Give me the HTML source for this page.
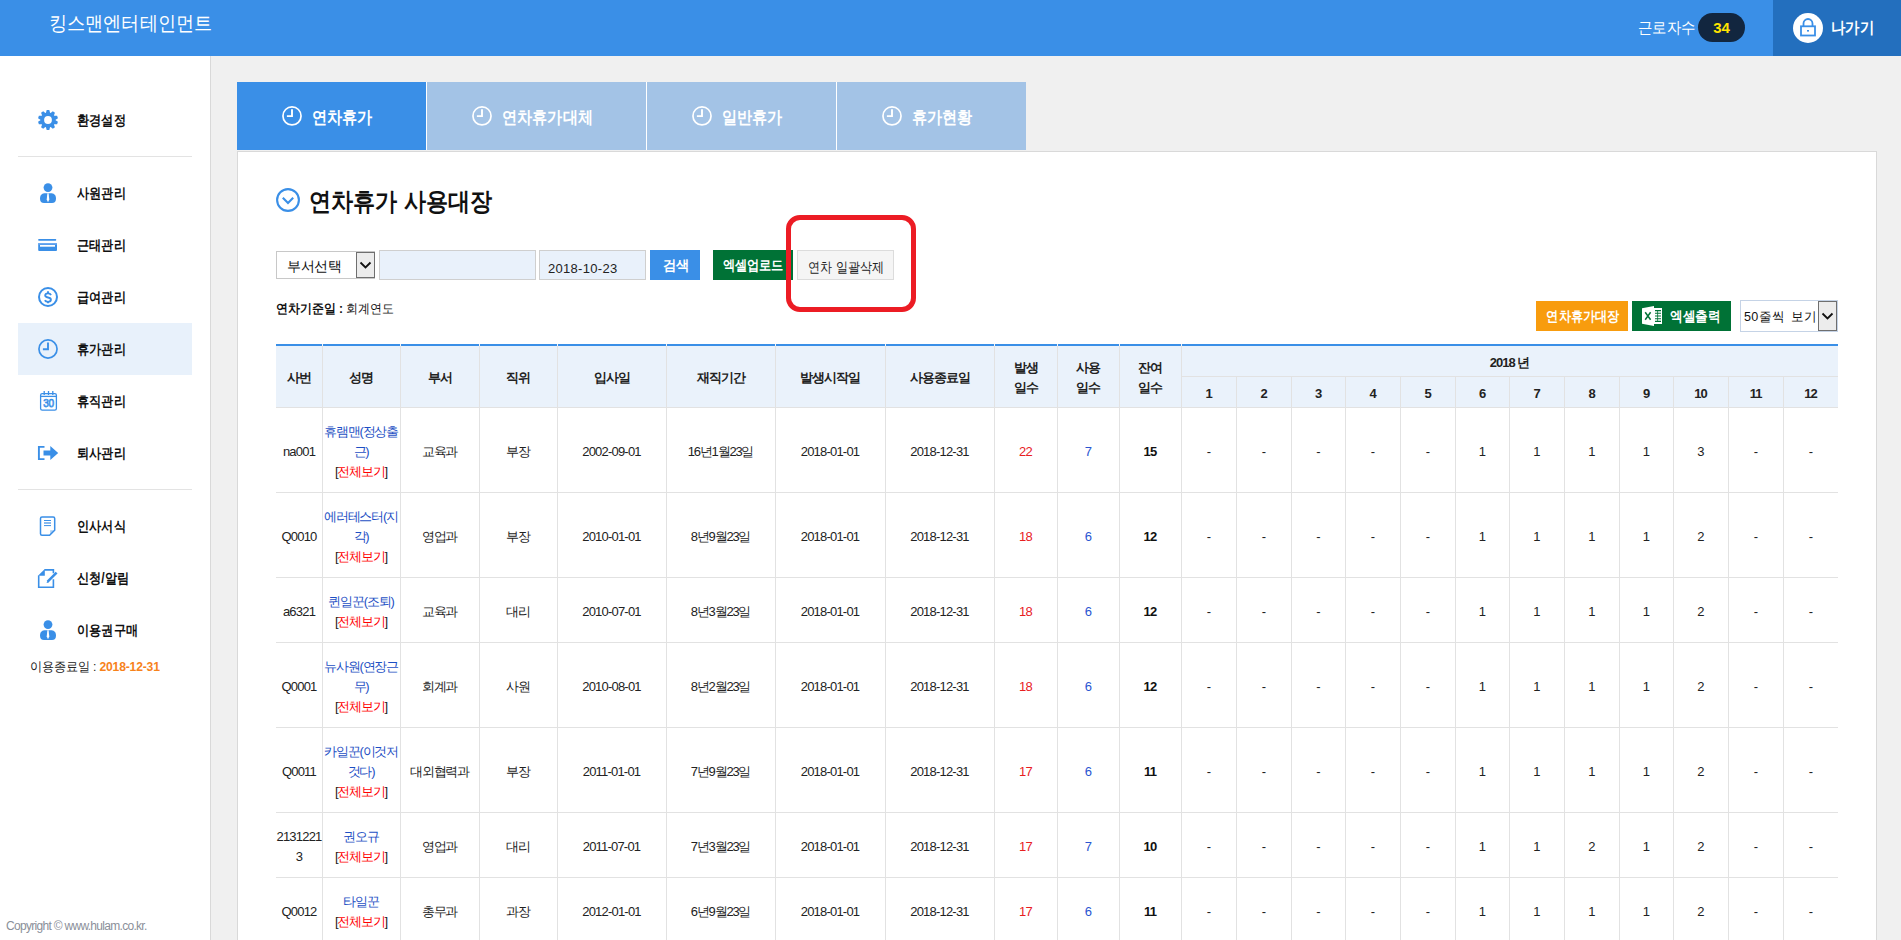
<!DOCTYPE html>
<html><head><meta charset="utf-8"><style>
html,body{margin:0;padding:0;width:1901px;height:940px;overflow:hidden;background:#f0f0f0;font-family:"Liberation Sans",sans-serif;}
div{box-sizing:border-box;}
.t{position:absolute;white-space:nowrap;line-height:1;}
</style></head><body>
<div style="position:absolute;left:0px;top:0px;width:1901px;height:56px;background:#3a8fe7;"></div>
<div style="position:absolute;left:49px;top:12px;white-space:nowrap;font-size:20px;line-height:22px;color:#fff;"><span style="display:inline-block;transform:scaleX(0.905);transform-origin:left 0;">킹스맨엔터테인먼트</span></div>
<div style="position:absolute;left:1638px;top:19px;white-space:nowrap;font-size:16px;line-height:18px;color:#fff;"><span style="display:inline-block;transform:scaleX(0.9);transform-origin:left 0;">근로자수</span></div>
<div style="position:absolute;left:1698px;top:13px;width:47px;height:29px;background:#12263f;border-radius:15px;"></div>
<div style="position:absolute;left:1698px;top:19px;width:47px;text-align:center;white-space:nowrap;font-size:15px;line-height:17px;font-weight:bold;color:#ffe400;">34</div>
<div style="position:absolute;left:1773px;top:0px;width:128px;height:56px;background:#236fbe;"></div>
<div style="position:absolute;left:1793px;top:13px;width:30px;height:30px;background:#fff;border-radius:50%;"></div>
<svg style="position:absolute;left:1793px;top:13px" width="30" height="30" viewBox="0 0 30 30">
<path d="M10.5 13 V10.5 A4.5 4.5 0 0 1 19.5 10.5 V13" fill="none" stroke="#3a8fe7" stroke-width="1.8"/>
<rect x="8" y="13.3" width="14" height="9.2" fill="none" stroke="#3a8fe7" stroke-width="1.8"/>
<rect x="14" y="17" width="2" height="1.6" fill="#3a8fe7"/>
</svg>
<div style="position:absolute;left:1831px;top:19px;white-space:nowrap;font-size:16px;line-height:18px;font-weight:bold;color:#fff;"><span style="display:inline-block;transform:scaleX(0.9);transform-origin:left 0;">나가기</span></div>
<div style="position:absolute;left:0px;top:56px;width:211px;height:884px;background:#fff;border-right:1px solid #d9d9d9;"></div>
<div style="position:absolute;left:18px;top:156px;width:174px;height:1px;background:#e3e3e3;"></div>
<div style="position:absolute;left:18px;top:489px;width:174px;height:1px;background:#e3e3e3;"></div>
<div style="position:absolute;left:18px;top:323px;width:174px;height:52px;background:#e8f1fb;"></div>
<div style="position:absolute;left:77px;top:112px;white-space:nowrap;font-size:14px;line-height:16px;font-weight:bold;color:#111;"><span style="display:inline-block;transform:scaleX(0.87);transform-origin:left 0;">환경설정</span></div>
<div style="position:absolute;left:77px;top:185px;white-space:nowrap;font-size:14px;line-height:16px;font-weight:bold;color:#111;"><span style="display:inline-block;transform:scaleX(0.87);transform-origin:left 0;">사원관리</span></div>
<div style="position:absolute;left:77px;top:237px;white-space:nowrap;font-size:14px;line-height:16px;font-weight:bold;color:#111;"><span style="display:inline-block;transform:scaleX(0.87);transform-origin:left 0;">근태관리</span></div>
<div style="position:absolute;left:77px;top:289px;white-space:nowrap;font-size:14px;line-height:16px;font-weight:bold;color:#111;"><span style="display:inline-block;transform:scaleX(0.87);transform-origin:left 0;">급여관리</span></div>
<div style="position:absolute;left:77px;top:341px;white-space:nowrap;font-size:14px;line-height:16px;font-weight:bold;color:#111;"><span style="display:inline-block;transform:scaleX(0.87);transform-origin:left 0;">휴가관리</span></div>
<div style="position:absolute;left:77px;top:393px;white-space:nowrap;font-size:14px;line-height:16px;font-weight:bold;color:#111;"><span style="display:inline-block;transform:scaleX(0.87);transform-origin:left 0;">휴직관리</span></div>
<div style="position:absolute;left:77px;top:445px;white-space:nowrap;font-size:14px;line-height:16px;font-weight:bold;color:#111;"><span style="display:inline-block;transform:scaleX(0.87);transform-origin:left 0;">퇴사관리</span></div>
<div style="position:absolute;left:77px;top:518px;white-space:nowrap;font-size:14px;line-height:16px;font-weight:bold;color:#111;"><span style="display:inline-block;transform:scaleX(0.87);transform-origin:left 0;">인사서식</span></div>
<div style="position:absolute;left:77px;top:570px;white-space:nowrap;font-size:14px;line-height:16px;font-weight:bold;color:#111;"><span style="display:inline-block;transform:scaleX(0.87);transform-origin:left 0;">신청/알림</span></div>
<div style="position:absolute;left:77px;top:622px;white-space:nowrap;font-size:14px;line-height:16px;font-weight:bold;color:#111;"><span style="display:inline-block;transform:scaleX(0.87);transform-origin:left 0;">이용권구매</span></div>
<svg style="position:absolute;left:0;top:0" width="211" height="700" viewBox="0 0 211 700"><polygon points="45.97,112.68 46.69,109.99 49.31,109.99 50.03,112.68 50.67,112.88 52.83,111.13 54.95,112.67 53.95,115.27 54.34,115.81 57.12,115.66 57.93,118.15 55.59,119.66 55.59,120.34 57.93,121.85 57.12,124.34 54.34,124.19 53.95,124.73 54.95,127.33 52.83,128.87 50.67,127.12 50.03,127.32 49.31,130.01 46.69,130.01 45.97,127.32 45.33,127.12 43.17,128.87 41.05,127.33 42.05,124.73 41.66,124.19 38.88,124.34 38.07,121.85 40.41,120.34 40.41,119.66 38.07,118.15 38.88,115.66 41.66,115.81 42.05,115.27 41.05,112.67 43.17,111.13 45.33,112.88" fill="#3a8fe7"/><circle cx="48" cy="120" r="3.9" fill="#fff"/><circle cx="48" cy="187.6" r="4.4" fill="#3a8fe7"/><path d="M40 198.6 C40 194.6 42.6 193.3 45.3 193.3 H50.7 C53.4 193.3 56 194.6 56 198.6 C56 201.8 54.6 203 52 203 H44 C41.4 203 40 201.8 40 198.6 Z" fill="#3a8fe7"/><path d="M47.4 193.3 H48.6 L49.3 199.5 L48 202.2 L46.7 199.5 Z" fill="#fff"/><rect x="38.2" y="239" width="18" height="1.7" rx="0.6" fill="#3a8fe7"/><rect x="38.2" y="243" width="18.8" height="8" rx="1" fill="#3a8fe7"/><rect x="38.2" y="243" width="18.8" height="1.6" fill="#6eaaf0"/><rect x="40" y="245" width="15" height="1.7" fill="#fff"/><circle cx="48" cy="297" r="9" fill="none" stroke="#3a8fe7" stroke-width="2"/><path d="M51 295.1 C50.5 294 49.4 293.4 48 293.4 C46.3 293.4 45.2 294.3 45.2 295.6 C45.2 297 46.6 297.3 48 297.5 C49.6 297.7 50.9 298.3 50.9 299.8 C50.9 301.1 49.6 301.9 48 301.9 C46.5 301.9 45.4 301.3 44.8 300.3" fill="none" stroke="#3a8fe7" stroke-width="1.9"/><path d="M48 291.2 V293.6 M48 301.7 V303.2" stroke="#3a8fe7" stroke-width="1.9"/><circle cx="48" cy="349" r="9.05" fill="none" stroke="#3a8fe7" stroke-width="1.7"/><path d="M48 342.4 V349.3 H42.9" fill="none" stroke="#3a8fe7" stroke-width="1.9"/><rect x="40.6" y="393.6" width="15.8" height="16.6" rx="1.6" fill="none" stroke="#3a8fe7" stroke-width="1.3"/><path d="M40.6 396.4 H56.4" stroke="#3a8fe7" stroke-width="1.3"/><path d="M44.2 391 V395 M48.5 391 V395 M52.8 391 V395" stroke="#3a8fe7" stroke-width="1.3"/><text x="48.6" y="407" font-size="10" text-anchor="middle" fill="none" stroke="#3a8fe7" stroke-width="0.75" font-family="Liberation Sans" letter-spacing="-0.2">30</text><path d="M44.5 446.9 H38.9 V459.1 H44.5" fill="none" stroke="#3a8fe7" stroke-width="1.9"/><path d="M43.5 450.6 H50.3 V446 L58.2 453 L50.3 460 V455.4 H43.5 Z" fill="#3a8fe7"/><path d="M42 516.9 H53.2 A1.5 1.5 0 0 1 54.7 518.4 V530.3 L49.6 535.2 H42 A1.5 1.5 0 0 1 40.5 533.7 V518.4 A1.5 1.5 0 0 1 42 516.9 Z" fill="none" stroke="#3a8fe7" stroke-width="1.5"/><path d="M44 520.5 H51 M44 525.6 H51" stroke="#3a8fe7" stroke-width="1"/><path d="M44 523 H51" stroke="#3a8fe7" stroke-width="1.6" opacity="0.75"/><path d="M54.7 530.3 H50.2 V535.2 Z" fill="#3a8fe7" opacity="0.45"/><path d="M44.5 569.9 H53.4 V573.2 M53.4 579.2 V587.3 H38.7 V575.6" fill="none" stroke="#3a8fe7" stroke-width="1.6"/><path d="M38 575.8 L44.8 569.1 V575.8 Z" fill="#3a8fe7"/><path d="M47.6 581.6 L56.6 572.6" stroke="#3a8fe7" stroke-width="2.6" stroke-linecap="butt"/><path d="M46.6 583 L47.2 580.7 L48.9 582.4 Z" fill="#3a8fe7"/><circle cx="48" cy="624.6" r="4.4" fill="#3a8fe7"/><path d="M40 635.6 C40 631.6 42.6 630.3 45.3 630.3 H50.7 C53.4 630.3 56 631.6 56 635.6 C56 638.8 54.6 640 52 640 H44 C41.4 640 40 638.8 40 635.6 Z" fill="#3a8fe7"/><path d="M47.4 630.3 H48.6 L49.3 636.5 L48 639.2 L46.7 636.5 Z" fill="#fff"/></svg>
<div style="position:absolute;left:30px;top:659px;white-space:nowrap;font-size:13px;line-height:15px;color:#222;letter-spacing:-0.2px;"><span style="display:inline-block;transform:scaleX(0.935);transform-origin:left 0;">이용종료일 : <b style="color:#f7821b">2018-12-31</b></span></div>
<div style="position:absolute;left:6px;top:919px;white-space:nowrap;font-size:12px;line-height:14px;color:#8a8f99;letter-spacing:-0.7px;">Copyright © www.hulam.co.kr.</div>
<div style="position:absolute;left:426px;top:82px;width:1px;height:68px;background:#fff;"></div>
<div style="position:absolute;left:646px;top:82px;width:1px;height:68px;background:#fff;"></div>
<div style="position:absolute;left:836px;top:82px;width:1px;height:68px;background:#fff;"></div>
<div style="position:absolute;left:237px;top:82px;width:189px;height:68px;background:#3a8fe7;"></div>
<svg style="position:absolute;left:282px;top:106px" width="20" height="20" viewBox="0 0 20 20"><circle cx="10" cy="9.9" r="9.05" fill="none" stroke="#fff" stroke-width="1.7"/><path d="M10 3.2 V10.1 H4.9" fill="none" stroke="#fff" stroke-width="1.9"/></svg>
<div style="position:absolute;left:312px;top:108px;white-space:nowrap;font-size:17px;line-height:19px;font-weight:bold;color:#fff;"><span style="display:inline-block;transform:scaleX(0.89);transform-origin:left 0;">연차휴가</span></div>
<div style="position:absolute;left:427px;top:82px;width:219px;height:68px;background:#a3c3e6;"></div>
<svg style="position:absolute;left:472px;top:106px" width="20" height="20" viewBox="0 0 20 20"><circle cx="10" cy="9.9" r="9.05" fill="none" stroke="#fff" stroke-width="1.7"/><path d="M10 3.2 V10.1 H4.9" fill="none" stroke="#fff" stroke-width="1.9"/></svg>
<div style="position:absolute;left:502px;top:108px;white-space:nowrap;font-size:17px;line-height:19px;font-weight:bold;color:#fff;"><span style="display:inline-block;transform:scaleX(0.89);transform-origin:left 0;">연차휴가대체</span></div>
<div style="position:absolute;left:647px;top:82px;width:189px;height:68px;background:#a3c3e6;"></div>
<svg style="position:absolute;left:692px;top:106px" width="20" height="20" viewBox="0 0 20 20"><circle cx="10" cy="9.9" r="9.05" fill="none" stroke="#fff" stroke-width="1.7"/><path d="M10 3.2 V10.1 H4.9" fill="none" stroke="#fff" stroke-width="1.9"/></svg>
<div style="position:absolute;left:722px;top:108px;white-space:nowrap;font-size:17px;line-height:19px;font-weight:bold;color:#fff;"><span style="display:inline-block;transform:scaleX(0.89);transform-origin:left 0;">일반휴가</span></div>
<div style="position:absolute;left:837px;top:82px;width:189px;height:68px;background:#a3c3e6;"></div>
<svg style="position:absolute;left:882px;top:106px" width="20" height="20" viewBox="0 0 20 20"><circle cx="10" cy="9.9" r="9.05" fill="none" stroke="#fff" stroke-width="1.7"/><path d="M10 3.2 V10.1 H4.9" fill="none" stroke="#fff" stroke-width="1.9"/></svg>
<div style="position:absolute;left:912px;top:108px;white-space:nowrap;font-size:17px;line-height:19px;font-weight:bold;color:#fff;"><span style="display:inline-block;transform:scaleX(0.89);transform-origin:left 0;">휴가현황</span></div>
<div style="position:absolute;left:237px;top:151px;width:1640px;height:800px;background:#fff;border:1px solid #d9d9d9;"></div>
<svg style="position:absolute;left:276px;top:188px" width="24" height="24" viewBox="0 0 24 24"><circle cx="12" cy="12" r="10.9" fill="none" stroke="#3a8fe7" stroke-width="2.1"/><path d="M6.8 9.8 L12 15 L17.2 9.8" fill="none" stroke="#3a8fe7" stroke-width="2.1"/></svg>
<div style="position:absolute;left:309px;top:188px;white-space:nowrap;font-size:25px;line-height:26px;font-weight:bold;color:#111;"><span style="display:inline-block;transform:scaleX(0.885);transform-origin:left 0;">연차휴가 사용대장</span></div>
<div style="position:absolute;left:276px;top:251px;width:99px;height:28px;background:#fff;border:1px solid #c8c8c8;"></div>
<div style="position:absolute;left:356px;top:252px;width:19px;height:26px;background:#ececec;border:1px solid #6f6f6f;"></div>
<svg style="position:absolute;left:356px;top:252px" width="19" height="26" viewBox="0 0 19 26"><path d="M4.5 10.5 L9.5 15.5 L14.5 10.5" fill="none" stroke="#111" stroke-width="1.8"/></svg>
<div style="position:absolute;left:287px;top:258px;white-space:nowrap;font-size:14px;line-height:16px;color:#111;letter-spacing:-0.5px;">부서선택</div>
<div style="position:absolute;left:379px;top:250px;width:157px;height:30px;background:#e9f1fb;border:1px solid #cfcfcf;"></div>
<div style="position:absolute;left:539px;top:250px;width:107px;height:30px;background:#e9f1fb;border:1px solid #cfcfcf;"></div>
<div style="position:absolute;left:548px;top:261px;white-space:nowrap;font-size:13px;line-height:15px;color:#222;letter-spacing:0.3px;">2018-10-23</div>
<div style="position:absolute;left:650px;top:250px;width:50px;height:30px;background:#3a8fe7;"></div>
<div style="position:absolute;left:650px;top:257px;width:51px;text-align:center;white-space:nowrap;font-size:14px;line-height:16px;font-weight:bold;color:#fff;"><span style="display:inline-block;transform:scaleX(0.95);transform-origin:center 0;">검색</span></div>
<div style="position:absolute;left:713px;top:250px;width:80px;height:30px;background:#007236;"></div>
<div style="position:absolute;left:713px;top:257px;width:80px;text-align:center;white-space:nowrap;font-size:14px;line-height:16px;font-weight:bold;color:#fff;"><span style="display:inline-block;transform:scaleX(0.87);transform-origin:center 0;">엑셀업로드</span></div>
<div style="position:absolute;left:797px;top:250px;width:97px;height:30px;background:#f5f5f5;border:1px solid #dcdcdc;"></div>
<div style="position:absolute;left:797px;top:259px;width:97px;text-align:center;white-space:nowrap;font-size:14px;line-height:16px;color:#222;"><span style="display:inline-block;transform:scaleX(0.86);transform-origin:center 0;">연차 일괄삭제</span></div>
<div style="position:absolute;left:276px;top:301px;white-space:nowrap;font-size:13px;line-height:15px;color:#111;"><span style="display:inline-block;transform:scaleX(0.92);transform-origin:left 0;"><b>연차기준일 :</b> 회계연도</span></div>
<div style="position:absolute;left:1536px;top:301px;width:92px;height:30px;background:#f89c0e;"></div>
<div style="position:absolute;left:1537px;top:308px;width:92px;text-align:center;white-space:nowrap;font-size:14px;line-height:16px;font-weight:bold;color:#fff;"><span style="display:inline-block;transform:scaleX(0.87);transform-origin:center 0;">연차휴가대장</span></div>
<div style="position:absolute;left:1632px;top:301px;width:99px;height:30px;background:#007236;"></div>
<svg style="position:absolute;left:1642px;top:306px" width="21" height="21" viewBox="0 0 21 21"><path d="M0 2.3 L12 0 V20 L0 17.7 Z" fill="#fff"/><rect x="12" y="2" width="8" height="16" fill="#fff"/><path d="M13 4.6 H19 M13 7.3 H19 M13 10 H19 M13 12.7 H19 M13 15.4 H19" stroke="#007236" stroke-width="1.1"/><path d="M15.6 4.2 V15.8" stroke="#007236" stroke-width="0.8"/><path d="M3.2 6.2 L8.6 13.8 M8.6 6.2 L3.2 13.8" stroke="#007236" stroke-width="1.5"/></svg>
<div style="position:absolute;left:1670px;top:308px;white-space:nowrap;font-size:14px;line-height:16px;font-weight:bold;color:#fff;"><span style="display:inline-block;transform:scaleX(0.9);transform-origin:left 0;">엑셀출력</span></div>
<div style="position:absolute;left:1740px;top:300px;width:98px;height:32px;background:#fff;border:1px solid #c5d3e6;"></div>
<div style="position:absolute;left:1818px;top:301px;width:19px;height:30px;background:#ececec;border:1px solid #6f6f6f;"></div>
<svg style="position:absolute;left:1818px;top:301px" width="19" height="30" viewBox="0 0 19 30"><path d="M4.5 12.5 L9.5 17.5 L14.5 12.5" fill="none" stroke="#111" stroke-width="1.8"/></svg>
<div style="position:absolute;left:1744px;top:309px;white-space:nowrap;font-size:13px;line-height:15px;color:#111;letter-spacing:0.3px;word-spacing:3px;"><span style="display:inline-block;transform:scaleX(0.97);transform-origin:left 0;">50줄씩 보기</span></div>
<div style="position:absolute;left:276px;top:344px;width:1562px;height:2px;background:#3a8fe7;"></div>
<div style="position:absolute;left:276px;top:346px;width:1562px;height:61px;background:#eaf2fb;"></div>
<div style="position:absolute;left:322px;top:344px;width:1px;height:2px;background:#f2f4f7;"></div>
<div style="position:absolute;left:400px;top:344px;width:1px;height:2px;background:#f2f4f7;"></div>
<div style="position:absolute;left:479px;top:344px;width:1px;height:2px;background:#f2f4f7;"></div>
<div style="position:absolute;left:557px;top:344px;width:1px;height:2px;background:#f2f4f7;"></div>
<div style="position:absolute;left:666px;top:344px;width:1px;height:2px;background:#f2f4f7;"></div>
<div style="position:absolute;left:775px;top:344px;width:1px;height:2px;background:#f2f4f7;"></div>
<div style="position:absolute;left:885px;top:344px;width:1px;height:2px;background:#f2f4f7;"></div>
<div style="position:absolute;left:994px;top:344px;width:1px;height:2px;background:#f2f4f7;"></div>
<div style="position:absolute;left:1057px;top:344px;width:1px;height:2px;background:#f2f4f7;"></div>
<div style="position:absolute;left:1119px;top:344px;width:1px;height:2px;background:#f2f4f7;"></div>
<div style="position:absolute;left:1181px;top:344px;width:1px;height:2px;background:#f2f4f7;"></div>
<div style="position:absolute;left:276px;top:407px;width:1562px;height:1px;background:#e2e2e2;"></div>
<div style="position:absolute;left:276px;top:492px;width:1562px;height:1px;background:#e2e2e2;"></div>
<div style="position:absolute;left:276px;top:577px;width:1562px;height:1px;background:#e2e2e2;"></div>
<div style="position:absolute;left:276px;top:642px;width:1562px;height:1px;background:#e2e2e2;"></div>
<div style="position:absolute;left:276px;top:727px;width:1562px;height:1px;background:#e2e2e2;"></div>
<div style="position:absolute;left:276px;top:812px;width:1562px;height:1px;background:#e2e2e2;"></div>
<div style="position:absolute;left:276px;top:877px;width:1562px;height:1px;background:#e2e2e2;"></div>
<div style="position:absolute;left:1181px;top:376px;width:657px;height:1px;background:#e2e2e2;"></div>
<div style="position:absolute;left:322px;top:346px;width:1px;height:594px;background:#e2e2e2;"></div>
<div style="position:absolute;left:400px;top:346px;width:1px;height:594px;background:#e2e2e2;"></div>
<div style="position:absolute;left:479px;top:346px;width:1px;height:594px;background:#e2e2e2;"></div>
<div style="position:absolute;left:557px;top:346px;width:1px;height:594px;background:#e2e2e2;"></div>
<div style="position:absolute;left:666px;top:346px;width:1px;height:594px;background:#e2e2e2;"></div>
<div style="position:absolute;left:775px;top:346px;width:1px;height:594px;background:#e2e2e2;"></div>
<div style="position:absolute;left:885px;top:346px;width:1px;height:594px;background:#e2e2e2;"></div>
<div style="position:absolute;left:994px;top:346px;width:1px;height:594px;background:#e2e2e2;"></div>
<div style="position:absolute;left:1057px;top:346px;width:1px;height:594px;background:#e2e2e2;"></div>
<div style="position:absolute;left:1119px;top:346px;width:1px;height:594px;background:#e2e2e2;"></div>
<div style="position:absolute;left:1181px;top:346px;width:1px;height:594px;background:#e2e2e2;"></div>
<div style="position:absolute;left:1236px;top:377px;width:1px;height:563px;background:#e2e2e2;"></div>
<div style="position:absolute;left:1291px;top:377px;width:1px;height:563px;background:#e2e2e2;"></div>
<div style="position:absolute;left:1345px;top:377px;width:1px;height:563px;background:#e2e2e2;"></div>
<div style="position:absolute;left:1400px;top:377px;width:1px;height:563px;background:#e2e2e2;"></div>
<div style="position:absolute;left:1455px;top:377px;width:1px;height:563px;background:#e2e2e2;"></div>
<div style="position:absolute;left:1509px;top:377px;width:1px;height:563px;background:#e2e2e2;"></div>
<div style="position:absolute;left:1564px;top:377px;width:1px;height:563px;background:#e2e2e2;"></div>
<div style="position:absolute;left:1619px;top:377px;width:1px;height:563px;background:#e2e2e2;"></div>
<div style="position:absolute;left:1673px;top:377px;width:1px;height:563px;background:#e2e2e2;"></div>
<div style="position:absolute;left:1728px;top:377px;width:1px;height:563px;background:#e2e2e2;"></div>
<div style="position:absolute;left:1783px;top:377px;width:1px;height:563px;background:#e2e2e2;"></div>
<div class="t" style="left:276px;top:367.5px;width:46px;text-align:center;font-size:13px;line-height:20px;font-weight:bold;color:#222;letter-spacing:-1px;">사번</div>
<div class="t" style="left:322px;top:367.5px;width:78px;text-align:center;font-size:13px;line-height:20px;font-weight:bold;color:#222;letter-spacing:-1px;">성명</div>
<div class="t" style="left:400px;top:367.5px;width:79px;text-align:center;font-size:13px;line-height:20px;font-weight:bold;color:#222;letter-spacing:-1px;">부서</div>
<div class="t" style="left:479px;top:367.5px;width:78px;text-align:center;font-size:13px;line-height:20px;font-weight:bold;color:#222;letter-spacing:-1px;">직위</div>
<div class="t" style="left:557px;top:367.5px;width:109px;text-align:center;font-size:13px;line-height:20px;font-weight:bold;color:#222;letter-spacing:-1px;">입사일</div>
<div class="t" style="left:666px;top:367.5px;width:109px;text-align:center;font-size:13px;line-height:20px;font-weight:bold;color:#222;letter-spacing:-1px;">재직기간</div>
<div class="t" style="left:775px;top:367.5px;width:110px;text-align:center;font-size:13px;line-height:20px;font-weight:bold;color:#222;letter-spacing:-1px;">발생시작일</div>
<div class="t" style="left:885px;top:367.5px;width:109px;text-align:center;font-size:13px;line-height:20px;font-weight:bold;color:#222;letter-spacing:-1px;">사용종료일</div>
<div class="t" style="left:994px;top:357.5px;width:63px;text-align:center;font-size:13px;line-height:20px;font-weight:bold;color:#222;letter-spacing:-1px;">발생<br>일수</div>
<div class="t" style="left:1057px;top:357.5px;width:62px;text-align:center;font-size:13px;line-height:20px;font-weight:bold;color:#222;letter-spacing:-1px;">사용<br>일수</div>
<div class="t" style="left:1119px;top:357.5px;width:62px;text-align:center;font-size:13px;line-height:20px;font-weight:bold;color:#222;letter-spacing:-1px;">잔여<br>일수</div>
<div class="t" style="left:1181px;top:353px;width:657px;text-align:center;font-size:13px;line-height:20px;font-weight:bold;color:#222;letter-spacing:-1px;">2018&nbsp;년</div>
<div class="t" style="left:1181px;top:384px;width:55px;text-align:center;font-size:13px;line-height:20px;font-weight:bold;color:#222;letter-spacing:-1px;">1</div>
<div class="t" style="left:1236px;top:384px;width:55px;text-align:center;font-size:13px;line-height:20px;font-weight:bold;color:#222;letter-spacing:-1px;">2</div>
<div class="t" style="left:1291px;top:384px;width:54px;text-align:center;font-size:13px;line-height:20px;font-weight:bold;color:#222;letter-spacing:-1px;">3</div>
<div class="t" style="left:1345px;top:384px;width:55px;text-align:center;font-size:13px;line-height:20px;font-weight:bold;color:#222;letter-spacing:-1px;">4</div>
<div class="t" style="left:1400px;top:384px;width:55px;text-align:center;font-size:13px;line-height:20px;font-weight:bold;color:#222;letter-spacing:-1px;">5</div>
<div class="t" style="left:1455px;top:384px;width:54px;text-align:center;font-size:13px;line-height:20px;font-weight:bold;color:#222;letter-spacing:-1px;">6</div>
<div class="t" style="left:1509px;top:384px;width:55px;text-align:center;font-size:13px;line-height:20px;font-weight:bold;color:#222;letter-spacing:-1px;">7</div>
<div class="t" style="left:1564px;top:384px;width:55px;text-align:center;font-size:13px;line-height:20px;font-weight:bold;color:#222;letter-spacing:-1px;">8</div>
<div class="t" style="left:1619px;top:384px;width:54px;text-align:center;font-size:13px;line-height:20px;font-weight:bold;color:#222;letter-spacing:-1px;">9</div>
<div class="t" style="left:1673px;top:384px;width:55px;text-align:center;font-size:13px;line-height:20px;font-weight:bold;color:#222;letter-spacing:-1px;">10</div>
<div class="t" style="left:1728px;top:384px;width:55px;text-align:center;font-size:13px;line-height:20px;font-weight:bold;color:#222;letter-spacing:-1px;">11</div>
<div class="t" style="left:1783px;top:384px;width:55px;text-align:center;font-size:13px;line-height:20px;font-weight:bold;color:#222;letter-spacing:-1px;">12</div>
<div class="t" style="left:276px;top:441.5px;width:46px;text-align:center;font-size:13px;line-height:20px;color:#222;letter-spacing:-0.8px;">na001</div>
<div class="t" style="left:322px;top:421.5px;width:78px;text-align:center;font-size:13px;line-height:20px;color:#222;letter-spacing:-0.8px;letter-spacing:-1.2px;"><span style="color:#1d4fc4">휴램맨(정상출<br>근)</span><br>[<span style="color:#f00">전체보기</span>]</div>
<div class="t" style="left:400px;top:441.5px;width:79px;text-align:center;font-size:13px;line-height:20px;color:#222;letter-spacing:-0.8px;letter-spacing:-1.2px;">교육과</div>
<div class="t" style="left:479px;top:441.5px;width:78px;text-align:center;font-size:13px;line-height:20px;color:#222;letter-spacing:-0.8px;letter-spacing:-1.2px;">부장</div>
<div class="t" style="left:557px;top:441.5px;width:109px;text-align:center;font-size:13px;line-height:20px;color:#222;letter-spacing:-0.8px;">2002-09-01</div>
<div class="t" style="left:666px;top:441.5px;width:109px;text-align:center;font-size:13px;line-height:20px;color:#222;letter-spacing:-0.8px;letter-spacing:-1.2px;">16년1월23일</div>
<div class="t" style="left:775px;top:441.5px;width:110px;text-align:center;font-size:13px;line-height:20px;color:#222;letter-spacing:-0.8px;">2018-01-01</div>
<div class="t" style="left:885px;top:441.5px;width:109px;text-align:center;font-size:13px;line-height:20px;color:#222;letter-spacing:-0.8px;">2018-12-31</div>
<div class="t" style="left:994px;top:441.5px;width:63px;text-align:center;font-size:13px;line-height:20px;color:#222;letter-spacing:-0.8px;color:#e8201f;">22</div>
<div class="t" style="left:1057px;top:441.5px;width:62px;text-align:center;font-size:13px;line-height:20px;color:#222;letter-spacing:-0.8px;color:#2a55d1;">7</div>
<div class="t" style="left:1119px;top:441.5px;width:62px;text-align:center;font-size:13px;line-height:20px;color:#222;letter-spacing:-0.8px;font-weight:bold;color:#111;">15</div>
<div class="t" style="left:1181px;top:441.5px;width:55px;text-align:center;font-size:13px;line-height:20px;color:#222;letter-spacing:-0.8px;">-</div>
<div class="t" style="left:1236px;top:441.5px;width:55px;text-align:center;font-size:13px;line-height:20px;color:#222;letter-spacing:-0.8px;">-</div>
<div class="t" style="left:1291px;top:441.5px;width:54px;text-align:center;font-size:13px;line-height:20px;color:#222;letter-spacing:-0.8px;">-</div>
<div class="t" style="left:1345px;top:441.5px;width:55px;text-align:center;font-size:13px;line-height:20px;color:#222;letter-spacing:-0.8px;">-</div>
<div class="t" style="left:1400px;top:441.5px;width:55px;text-align:center;font-size:13px;line-height:20px;color:#222;letter-spacing:-0.8px;">-</div>
<div class="t" style="left:1455px;top:441.5px;width:54px;text-align:center;font-size:13px;line-height:20px;color:#222;letter-spacing:-0.8px;">1</div>
<div class="t" style="left:1509px;top:441.5px;width:55px;text-align:center;font-size:13px;line-height:20px;color:#222;letter-spacing:-0.8px;">1</div>
<div class="t" style="left:1564px;top:441.5px;width:55px;text-align:center;font-size:13px;line-height:20px;color:#222;letter-spacing:-0.8px;">1</div>
<div class="t" style="left:1619px;top:441.5px;width:54px;text-align:center;font-size:13px;line-height:20px;color:#222;letter-spacing:-0.8px;">1</div>
<div class="t" style="left:1673px;top:441.5px;width:55px;text-align:center;font-size:13px;line-height:20px;color:#222;letter-spacing:-0.8px;">3</div>
<div class="t" style="left:1728px;top:441.5px;width:55px;text-align:center;font-size:13px;line-height:20px;color:#222;letter-spacing:-0.8px;">-</div>
<div class="t" style="left:1783px;top:441.5px;width:55px;text-align:center;font-size:13px;line-height:20px;color:#222;letter-spacing:-0.8px;">-</div>
<div class="t" style="left:276px;top:526.5px;width:46px;text-align:center;font-size:13px;line-height:20px;color:#222;letter-spacing:-0.8px;">Q0010</div>
<div class="t" style="left:322px;top:506.5px;width:78px;text-align:center;font-size:13px;line-height:20px;color:#222;letter-spacing:-0.8px;letter-spacing:-1.2px;"><span style="color:#1d4fc4">에러테스터(지<br>각)</span><br>[<span style="color:#f00">전체보기</span>]</div>
<div class="t" style="left:400px;top:526.5px;width:79px;text-align:center;font-size:13px;line-height:20px;color:#222;letter-spacing:-0.8px;letter-spacing:-1.2px;">영업과</div>
<div class="t" style="left:479px;top:526.5px;width:78px;text-align:center;font-size:13px;line-height:20px;color:#222;letter-spacing:-0.8px;letter-spacing:-1.2px;">부장</div>
<div class="t" style="left:557px;top:526.5px;width:109px;text-align:center;font-size:13px;line-height:20px;color:#222;letter-spacing:-0.8px;">2010-01-01</div>
<div class="t" style="left:666px;top:526.5px;width:109px;text-align:center;font-size:13px;line-height:20px;color:#222;letter-spacing:-0.8px;letter-spacing:-1.2px;">8년9월23일</div>
<div class="t" style="left:775px;top:526.5px;width:110px;text-align:center;font-size:13px;line-height:20px;color:#222;letter-spacing:-0.8px;">2018-01-01</div>
<div class="t" style="left:885px;top:526.5px;width:109px;text-align:center;font-size:13px;line-height:20px;color:#222;letter-spacing:-0.8px;">2018-12-31</div>
<div class="t" style="left:994px;top:526.5px;width:63px;text-align:center;font-size:13px;line-height:20px;color:#222;letter-spacing:-0.8px;color:#e8201f;">18</div>
<div class="t" style="left:1057px;top:526.5px;width:62px;text-align:center;font-size:13px;line-height:20px;color:#222;letter-spacing:-0.8px;color:#2a55d1;">6</div>
<div class="t" style="left:1119px;top:526.5px;width:62px;text-align:center;font-size:13px;line-height:20px;color:#222;letter-spacing:-0.8px;font-weight:bold;color:#111;">12</div>
<div class="t" style="left:1181px;top:526.5px;width:55px;text-align:center;font-size:13px;line-height:20px;color:#222;letter-spacing:-0.8px;">-</div>
<div class="t" style="left:1236px;top:526.5px;width:55px;text-align:center;font-size:13px;line-height:20px;color:#222;letter-spacing:-0.8px;">-</div>
<div class="t" style="left:1291px;top:526.5px;width:54px;text-align:center;font-size:13px;line-height:20px;color:#222;letter-spacing:-0.8px;">-</div>
<div class="t" style="left:1345px;top:526.5px;width:55px;text-align:center;font-size:13px;line-height:20px;color:#222;letter-spacing:-0.8px;">-</div>
<div class="t" style="left:1400px;top:526.5px;width:55px;text-align:center;font-size:13px;line-height:20px;color:#222;letter-spacing:-0.8px;">-</div>
<div class="t" style="left:1455px;top:526.5px;width:54px;text-align:center;font-size:13px;line-height:20px;color:#222;letter-spacing:-0.8px;">1</div>
<div class="t" style="left:1509px;top:526.5px;width:55px;text-align:center;font-size:13px;line-height:20px;color:#222;letter-spacing:-0.8px;">1</div>
<div class="t" style="left:1564px;top:526.5px;width:55px;text-align:center;font-size:13px;line-height:20px;color:#222;letter-spacing:-0.8px;">1</div>
<div class="t" style="left:1619px;top:526.5px;width:54px;text-align:center;font-size:13px;line-height:20px;color:#222;letter-spacing:-0.8px;">1</div>
<div class="t" style="left:1673px;top:526.5px;width:55px;text-align:center;font-size:13px;line-height:20px;color:#222;letter-spacing:-0.8px;">2</div>
<div class="t" style="left:1728px;top:526.5px;width:55px;text-align:center;font-size:13px;line-height:20px;color:#222;letter-spacing:-0.8px;">-</div>
<div class="t" style="left:1783px;top:526.5px;width:55px;text-align:center;font-size:13px;line-height:20px;color:#222;letter-spacing:-0.8px;">-</div>
<div class="t" style="left:276px;top:601.5px;width:46px;text-align:center;font-size:13px;line-height:20px;color:#222;letter-spacing:-0.8px;">a6321</div>
<div class="t" style="left:322px;top:591.5px;width:78px;text-align:center;font-size:13px;line-height:20px;color:#222;letter-spacing:-0.8px;letter-spacing:-1.2px;"><span style="color:#1d4fc4">퀸일꾼(조퇴)</span><br>[<span style="color:#f00">전체보기</span>]</div>
<div class="t" style="left:400px;top:601.5px;width:79px;text-align:center;font-size:13px;line-height:20px;color:#222;letter-spacing:-0.8px;letter-spacing:-1.2px;">교육과</div>
<div class="t" style="left:479px;top:601.5px;width:78px;text-align:center;font-size:13px;line-height:20px;color:#222;letter-spacing:-0.8px;letter-spacing:-1.2px;">대리</div>
<div class="t" style="left:557px;top:601.5px;width:109px;text-align:center;font-size:13px;line-height:20px;color:#222;letter-spacing:-0.8px;">2010-07-01</div>
<div class="t" style="left:666px;top:601.5px;width:109px;text-align:center;font-size:13px;line-height:20px;color:#222;letter-spacing:-0.8px;letter-spacing:-1.2px;">8년3월23일</div>
<div class="t" style="left:775px;top:601.5px;width:110px;text-align:center;font-size:13px;line-height:20px;color:#222;letter-spacing:-0.8px;">2018-01-01</div>
<div class="t" style="left:885px;top:601.5px;width:109px;text-align:center;font-size:13px;line-height:20px;color:#222;letter-spacing:-0.8px;">2018-12-31</div>
<div class="t" style="left:994px;top:601.5px;width:63px;text-align:center;font-size:13px;line-height:20px;color:#222;letter-spacing:-0.8px;color:#e8201f;">18</div>
<div class="t" style="left:1057px;top:601.5px;width:62px;text-align:center;font-size:13px;line-height:20px;color:#222;letter-spacing:-0.8px;color:#2a55d1;">6</div>
<div class="t" style="left:1119px;top:601.5px;width:62px;text-align:center;font-size:13px;line-height:20px;color:#222;letter-spacing:-0.8px;font-weight:bold;color:#111;">12</div>
<div class="t" style="left:1181px;top:601.5px;width:55px;text-align:center;font-size:13px;line-height:20px;color:#222;letter-spacing:-0.8px;">-</div>
<div class="t" style="left:1236px;top:601.5px;width:55px;text-align:center;font-size:13px;line-height:20px;color:#222;letter-spacing:-0.8px;">-</div>
<div class="t" style="left:1291px;top:601.5px;width:54px;text-align:center;font-size:13px;line-height:20px;color:#222;letter-spacing:-0.8px;">-</div>
<div class="t" style="left:1345px;top:601.5px;width:55px;text-align:center;font-size:13px;line-height:20px;color:#222;letter-spacing:-0.8px;">-</div>
<div class="t" style="left:1400px;top:601.5px;width:55px;text-align:center;font-size:13px;line-height:20px;color:#222;letter-spacing:-0.8px;">-</div>
<div class="t" style="left:1455px;top:601.5px;width:54px;text-align:center;font-size:13px;line-height:20px;color:#222;letter-spacing:-0.8px;">1</div>
<div class="t" style="left:1509px;top:601.5px;width:55px;text-align:center;font-size:13px;line-height:20px;color:#222;letter-spacing:-0.8px;">1</div>
<div class="t" style="left:1564px;top:601.5px;width:55px;text-align:center;font-size:13px;line-height:20px;color:#222;letter-spacing:-0.8px;">1</div>
<div class="t" style="left:1619px;top:601.5px;width:54px;text-align:center;font-size:13px;line-height:20px;color:#222;letter-spacing:-0.8px;">1</div>
<div class="t" style="left:1673px;top:601.5px;width:55px;text-align:center;font-size:13px;line-height:20px;color:#222;letter-spacing:-0.8px;">2</div>
<div class="t" style="left:1728px;top:601.5px;width:55px;text-align:center;font-size:13px;line-height:20px;color:#222;letter-spacing:-0.8px;">-</div>
<div class="t" style="left:1783px;top:601.5px;width:55px;text-align:center;font-size:13px;line-height:20px;color:#222;letter-spacing:-0.8px;">-</div>
<div class="t" style="left:276px;top:676.5px;width:46px;text-align:center;font-size:13px;line-height:20px;color:#222;letter-spacing:-0.8px;">Q0001</div>
<div class="t" style="left:322px;top:656.5px;width:78px;text-align:center;font-size:13px;line-height:20px;color:#222;letter-spacing:-0.8px;letter-spacing:-1.2px;"><span style="color:#1d4fc4">뉴사원(연장근<br>무)</span><br>[<span style="color:#f00">전체보기</span>]</div>
<div class="t" style="left:400px;top:676.5px;width:79px;text-align:center;font-size:13px;line-height:20px;color:#222;letter-spacing:-0.8px;letter-spacing:-1.2px;">회계과</div>
<div class="t" style="left:479px;top:676.5px;width:78px;text-align:center;font-size:13px;line-height:20px;color:#222;letter-spacing:-0.8px;letter-spacing:-1.2px;">사원</div>
<div class="t" style="left:557px;top:676.5px;width:109px;text-align:center;font-size:13px;line-height:20px;color:#222;letter-spacing:-0.8px;">2010-08-01</div>
<div class="t" style="left:666px;top:676.5px;width:109px;text-align:center;font-size:13px;line-height:20px;color:#222;letter-spacing:-0.8px;letter-spacing:-1.2px;">8년2월23일</div>
<div class="t" style="left:775px;top:676.5px;width:110px;text-align:center;font-size:13px;line-height:20px;color:#222;letter-spacing:-0.8px;">2018-01-01</div>
<div class="t" style="left:885px;top:676.5px;width:109px;text-align:center;font-size:13px;line-height:20px;color:#222;letter-spacing:-0.8px;">2018-12-31</div>
<div class="t" style="left:994px;top:676.5px;width:63px;text-align:center;font-size:13px;line-height:20px;color:#222;letter-spacing:-0.8px;color:#e8201f;">18</div>
<div class="t" style="left:1057px;top:676.5px;width:62px;text-align:center;font-size:13px;line-height:20px;color:#222;letter-spacing:-0.8px;color:#2a55d1;">6</div>
<div class="t" style="left:1119px;top:676.5px;width:62px;text-align:center;font-size:13px;line-height:20px;color:#222;letter-spacing:-0.8px;font-weight:bold;color:#111;">12</div>
<div class="t" style="left:1181px;top:676.5px;width:55px;text-align:center;font-size:13px;line-height:20px;color:#222;letter-spacing:-0.8px;">-</div>
<div class="t" style="left:1236px;top:676.5px;width:55px;text-align:center;font-size:13px;line-height:20px;color:#222;letter-spacing:-0.8px;">-</div>
<div class="t" style="left:1291px;top:676.5px;width:54px;text-align:center;font-size:13px;line-height:20px;color:#222;letter-spacing:-0.8px;">-</div>
<div class="t" style="left:1345px;top:676.5px;width:55px;text-align:center;font-size:13px;line-height:20px;color:#222;letter-spacing:-0.8px;">-</div>
<div class="t" style="left:1400px;top:676.5px;width:55px;text-align:center;font-size:13px;line-height:20px;color:#222;letter-spacing:-0.8px;">-</div>
<div class="t" style="left:1455px;top:676.5px;width:54px;text-align:center;font-size:13px;line-height:20px;color:#222;letter-spacing:-0.8px;">1</div>
<div class="t" style="left:1509px;top:676.5px;width:55px;text-align:center;font-size:13px;line-height:20px;color:#222;letter-spacing:-0.8px;">1</div>
<div class="t" style="left:1564px;top:676.5px;width:55px;text-align:center;font-size:13px;line-height:20px;color:#222;letter-spacing:-0.8px;">1</div>
<div class="t" style="left:1619px;top:676.5px;width:54px;text-align:center;font-size:13px;line-height:20px;color:#222;letter-spacing:-0.8px;">1</div>
<div class="t" style="left:1673px;top:676.5px;width:55px;text-align:center;font-size:13px;line-height:20px;color:#222;letter-spacing:-0.8px;">2</div>
<div class="t" style="left:1728px;top:676.5px;width:55px;text-align:center;font-size:13px;line-height:20px;color:#222;letter-spacing:-0.8px;">-</div>
<div class="t" style="left:1783px;top:676.5px;width:55px;text-align:center;font-size:13px;line-height:20px;color:#222;letter-spacing:-0.8px;">-</div>
<div class="t" style="left:276px;top:761.5px;width:46px;text-align:center;font-size:13px;line-height:20px;color:#222;letter-spacing:-0.8px;">Q0011</div>
<div class="t" style="left:322px;top:741.5px;width:78px;text-align:center;font-size:13px;line-height:20px;color:#222;letter-spacing:-0.8px;letter-spacing:-1.2px;"><span style="color:#1d4fc4">카일꾼(이것저<br>것다)</span><br>[<span style="color:#f00">전체보기</span>]</div>
<div class="t" style="left:400px;top:761.5px;width:79px;text-align:center;font-size:13px;line-height:20px;color:#222;letter-spacing:-0.8px;letter-spacing:-1.2px;">대외협력과</div>
<div class="t" style="left:479px;top:761.5px;width:78px;text-align:center;font-size:13px;line-height:20px;color:#222;letter-spacing:-0.8px;letter-spacing:-1.2px;">부장</div>
<div class="t" style="left:557px;top:761.5px;width:109px;text-align:center;font-size:13px;line-height:20px;color:#222;letter-spacing:-0.8px;">2011-01-01</div>
<div class="t" style="left:666px;top:761.5px;width:109px;text-align:center;font-size:13px;line-height:20px;color:#222;letter-spacing:-0.8px;letter-spacing:-1.2px;">7년9월23일</div>
<div class="t" style="left:775px;top:761.5px;width:110px;text-align:center;font-size:13px;line-height:20px;color:#222;letter-spacing:-0.8px;">2018-01-01</div>
<div class="t" style="left:885px;top:761.5px;width:109px;text-align:center;font-size:13px;line-height:20px;color:#222;letter-spacing:-0.8px;">2018-12-31</div>
<div class="t" style="left:994px;top:761.5px;width:63px;text-align:center;font-size:13px;line-height:20px;color:#222;letter-spacing:-0.8px;color:#e8201f;">17</div>
<div class="t" style="left:1057px;top:761.5px;width:62px;text-align:center;font-size:13px;line-height:20px;color:#222;letter-spacing:-0.8px;color:#2a55d1;">6</div>
<div class="t" style="left:1119px;top:761.5px;width:62px;text-align:center;font-size:13px;line-height:20px;color:#222;letter-spacing:-0.8px;font-weight:bold;color:#111;">11</div>
<div class="t" style="left:1181px;top:761.5px;width:55px;text-align:center;font-size:13px;line-height:20px;color:#222;letter-spacing:-0.8px;">-</div>
<div class="t" style="left:1236px;top:761.5px;width:55px;text-align:center;font-size:13px;line-height:20px;color:#222;letter-spacing:-0.8px;">-</div>
<div class="t" style="left:1291px;top:761.5px;width:54px;text-align:center;font-size:13px;line-height:20px;color:#222;letter-spacing:-0.8px;">-</div>
<div class="t" style="left:1345px;top:761.5px;width:55px;text-align:center;font-size:13px;line-height:20px;color:#222;letter-spacing:-0.8px;">-</div>
<div class="t" style="left:1400px;top:761.5px;width:55px;text-align:center;font-size:13px;line-height:20px;color:#222;letter-spacing:-0.8px;">-</div>
<div class="t" style="left:1455px;top:761.5px;width:54px;text-align:center;font-size:13px;line-height:20px;color:#222;letter-spacing:-0.8px;">1</div>
<div class="t" style="left:1509px;top:761.5px;width:55px;text-align:center;font-size:13px;line-height:20px;color:#222;letter-spacing:-0.8px;">1</div>
<div class="t" style="left:1564px;top:761.5px;width:55px;text-align:center;font-size:13px;line-height:20px;color:#222;letter-spacing:-0.8px;">1</div>
<div class="t" style="left:1619px;top:761.5px;width:54px;text-align:center;font-size:13px;line-height:20px;color:#222;letter-spacing:-0.8px;">1</div>
<div class="t" style="left:1673px;top:761.5px;width:55px;text-align:center;font-size:13px;line-height:20px;color:#222;letter-spacing:-0.8px;">2</div>
<div class="t" style="left:1728px;top:761.5px;width:55px;text-align:center;font-size:13px;line-height:20px;color:#222;letter-spacing:-0.8px;">-</div>
<div class="t" style="left:1783px;top:761.5px;width:55px;text-align:center;font-size:13px;line-height:20px;color:#222;letter-spacing:-0.8px;">-</div>
<div class="t" style="left:276px;top:826.5px;width:46px;text-align:center;font-size:13px;line-height:20px;color:#222;letter-spacing:-0.8px;">2131221<br>3</div>
<div class="t" style="left:322px;top:826.5px;width:78px;text-align:center;font-size:13px;line-height:20px;color:#222;letter-spacing:-0.8px;letter-spacing:-1.2px;"><span style="color:#1d4fc4">권오규</span><br>[<span style="color:#f00">전체보기</span>]</div>
<div class="t" style="left:400px;top:836.5px;width:79px;text-align:center;font-size:13px;line-height:20px;color:#222;letter-spacing:-0.8px;letter-spacing:-1.2px;">영업과</div>
<div class="t" style="left:479px;top:836.5px;width:78px;text-align:center;font-size:13px;line-height:20px;color:#222;letter-spacing:-0.8px;letter-spacing:-1.2px;">대리</div>
<div class="t" style="left:557px;top:836.5px;width:109px;text-align:center;font-size:13px;line-height:20px;color:#222;letter-spacing:-0.8px;">2011-07-01</div>
<div class="t" style="left:666px;top:836.5px;width:109px;text-align:center;font-size:13px;line-height:20px;color:#222;letter-spacing:-0.8px;letter-spacing:-1.2px;">7년3월23일</div>
<div class="t" style="left:775px;top:836.5px;width:110px;text-align:center;font-size:13px;line-height:20px;color:#222;letter-spacing:-0.8px;">2018-01-01</div>
<div class="t" style="left:885px;top:836.5px;width:109px;text-align:center;font-size:13px;line-height:20px;color:#222;letter-spacing:-0.8px;">2018-12-31</div>
<div class="t" style="left:994px;top:836.5px;width:63px;text-align:center;font-size:13px;line-height:20px;color:#222;letter-spacing:-0.8px;color:#e8201f;">17</div>
<div class="t" style="left:1057px;top:836.5px;width:62px;text-align:center;font-size:13px;line-height:20px;color:#222;letter-spacing:-0.8px;color:#2a55d1;">7</div>
<div class="t" style="left:1119px;top:836.5px;width:62px;text-align:center;font-size:13px;line-height:20px;color:#222;letter-spacing:-0.8px;font-weight:bold;color:#111;">10</div>
<div class="t" style="left:1181px;top:836.5px;width:55px;text-align:center;font-size:13px;line-height:20px;color:#222;letter-spacing:-0.8px;">-</div>
<div class="t" style="left:1236px;top:836.5px;width:55px;text-align:center;font-size:13px;line-height:20px;color:#222;letter-spacing:-0.8px;">-</div>
<div class="t" style="left:1291px;top:836.5px;width:54px;text-align:center;font-size:13px;line-height:20px;color:#222;letter-spacing:-0.8px;">-</div>
<div class="t" style="left:1345px;top:836.5px;width:55px;text-align:center;font-size:13px;line-height:20px;color:#222;letter-spacing:-0.8px;">-</div>
<div class="t" style="left:1400px;top:836.5px;width:55px;text-align:center;font-size:13px;line-height:20px;color:#222;letter-spacing:-0.8px;">-</div>
<div class="t" style="left:1455px;top:836.5px;width:54px;text-align:center;font-size:13px;line-height:20px;color:#222;letter-spacing:-0.8px;">1</div>
<div class="t" style="left:1509px;top:836.5px;width:55px;text-align:center;font-size:13px;line-height:20px;color:#222;letter-spacing:-0.8px;">1</div>
<div class="t" style="left:1564px;top:836.5px;width:55px;text-align:center;font-size:13px;line-height:20px;color:#222;letter-spacing:-0.8px;">2</div>
<div class="t" style="left:1619px;top:836.5px;width:54px;text-align:center;font-size:13px;line-height:20px;color:#222;letter-spacing:-0.8px;">1</div>
<div class="t" style="left:1673px;top:836.5px;width:55px;text-align:center;font-size:13px;line-height:20px;color:#222;letter-spacing:-0.8px;">2</div>
<div class="t" style="left:1728px;top:836.5px;width:55px;text-align:center;font-size:13px;line-height:20px;color:#222;letter-spacing:-0.8px;">-</div>
<div class="t" style="left:1783px;top:836.5px;width:55px;text-align:center;font-size:13px;line-height:20px;color:#222;letter-spacing:-0.8px;">-</div>
<div class="t" style="left:276px;top:901.5px;width:46px;text-align:center;font-size:13px;line-height:20px;color:#222;letter-spacing:-0.8px;">Q0012</div>
<div class="t" style="left:322px;top:891.5px;width:78px;text-align:center;font-size:13px;line-height:20px;color:#222;letter-spacing:-0.8px;letter-spacing:-1.2px;"><span style="color:#1d4fc4">타일꾼</span><br>[<span style="color:#f00">전체보기</span>]</div>
<div class="t" style="left:400px;top:901.5px;width:79px;text-align:center;font-size:13px;line-height:20px;color:#222;letter-spacing:-0.8px;letter-spacing:-1.2px;">총무과</div>
<div class="t" style="left:479px;top:901.5px;width:78px;text-align:center;font-size:13px;line-height:20px;color:#222;letter-spacing:-0.8px;letter-spacing:-1.2px;">과장</div>
<div class="t" style="left:557px;top:901.5px;width:109px;text-align:center;font-size:13px;line-height:20px;color:#222;letter-spacing:-0.8px;">2012-01-01</div>
<div class="t" style="left:666px;top:901.5px;width:109px;text-align:center;font-size:13px;line-height:20px;color:#222;letter-spacing:-0.8px;letter-spacing:-1.2px;">6년9월23일</div>
<div class="t" style="left:775px;top:901.5px;width:110px;text-align:center;font-size:13px;line-height:20px;color:#222;letter-spacing:-0.8px;">2018-01-01</div>
<div class="t" style="left:885px;top:901.5px;width:109px;text-align:center;font-size:13px;line-height:20px;color:#222;letter-spacing:-0.8px;">2018-12-31</div>
<div class="t" style="left:994px;top:901.5px;width:63px;text-align:center;font-size:13px;line-height:20px;color:#222;letter-spacing:-0.8px;color:#e8201f;">17</div>
<div class="t" style="left:1057px;top:901.5px;width:62px;text-align:center;font-size:13px;line-height:20px;color:#222;letter-spacing:-0.8px;color:#2a55d1;">6</div>
<div class="t" style="left:1119px;top:901.5px;width:62px;text-align:center;font-size:13px;line-height:20px;color:#222;letter-spacing:-0.8px;font-weight:bold;color:#111;">11</div>
<div class="t" style="left:1181px;top:901.5px;width:55px;text-align:center;font-size:13px;line-height:20px;color:#222;letter-spacing:-0.8px;">-</div>
<div class="t" style="left:1236px;top:901.5px;width:55px;text-align:center;font-size:13px;line-height:20px;color:#222;letter-spacing:-0.8px;">-</div>
<div class="t" style="left:1291px;top:901.5px;width:54px;text-align:center;font-size:13px;line-height:20px;color:#222;letter-spacing:-0.8px;">-</div>
<div class="t" style="left:1345px;top:901.5px;width:55px;text-align:center;font-size:13px;line-height:20px;color:#222;letter-spacing:-0.8px;">-</div>
<div class="t" style="left:1400px;top:901.5px;width:55px;text-align:center;font-size:13px;line-height:20px;color:#222;letter-spacing:-0.8px;">-</div>
<div class="t" style="left:1455px;top:901.5px;width:54px;text-align:center;font-size:13px;line-height:20px;color:#222;letter-spacing:-0.8px;">1</div>
<div class="t" style="left:1509px;top:901.5px;width:55px;text-align:center;font-size:13px;line-height:20px;color:#222;letter-spacing:-0.8px;">1</div>
<div class="t" style="left:1564px;top:901.5px;width:55px;text-align:center;font-size:13px;line-height:20px;color:#222;letter-spacing:-0.8px;">1</div>
<div class="t" style="left:1619px;top:901.5px;width:54px;text-align:center;font-size:13px;line-height:20px;color:#222;letter-spacing:-0.8px;">1</div>
<div class="t" style="left:1673px;top:901.5px;width:55px;text-align:center;font-size:13px;line-height:20px;color:#222;letter-spacing:-0.8px;">2</div>
<div class="t" style="left:1728px;top:901.5px;width:55px;text-align:center;font-size:13px;line-height:20px;color:#222;letter-spacing:-0.8px;">-</div>
<div class="t" style="left:1783px;top:901.5px;width:55px;text-align:center;font-size:13px;line-height:20px;color:#222;letter-spacing:-0.8px;">-</div>
<div style="position:absolute;left:786px;top:215px;width:130px;height:97px;border:5px solid #ec1c24;border-radius:14px;box-sizing:border-box;"></div>
</body></html>
